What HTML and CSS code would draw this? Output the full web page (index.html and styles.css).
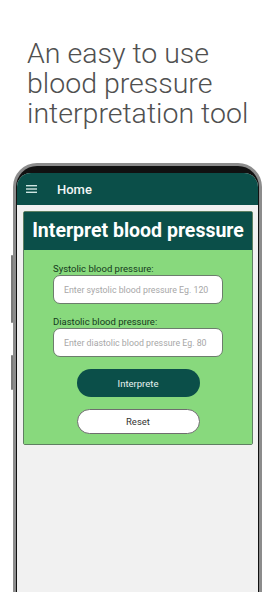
FILE: index.html
```html
<!DOCTYPE html>
<html>
	<head>
		<title>Blood pressure</title>
		<link rel="stylesheet" href="styles.css">
	</head>
	<body>
		<h1 class="headline">An easy to use<br>blood pressure<br>interpretation tool</h1>
		<div class="phone">
			<div class="screen">
				<div class="appbar">
					<svg class="menu" width="11" height="8" viewBox="0 0 11 8">
						<rect x="0" y="0" width="11" height="1.4" fill="#cfe6e2"/>
						<rect x="0" y="3.3" width="11" height="1.4" fill="#cfe6e2"/>
						<rect x="0" y="6.6" width="11" height="1.4" fill="#cfe6e2"/>
					</svg>
					<span class="title">Home</span>
				</div>
				<div class="content">
					<div class="card">
						<div class="card-head">Interpret blood pressure</div>
						<div class="card-body">
							<label class="label">Systolic blood pressure:</label>
							<input class="field" placeholder="Enter systolic blood pressure Eg. 120" />
							<label class="label">Diastolic blood pressure:</label>
							<input class="field" placeholder="Enter diastolic blood pressure Eg. 80" />
							<button class="btn primary">Interprete</button>
							<button class="btn secondary">Reset</button>
						</div>
					</div>
				</div>
			</div>
		</div>
	</body>
</html>
```
FILE: styles.css
```css
body {
	margin: 0;
	background: #fff;
	font-family: Roboto, "Liberation Sans", sans-serif;
	overflow: hidden;
	height: 592px;
}
.headline {
	margin: 0;
	padding: 39px 0 0 27px;
	height: 163px;
	box-sizing: border-box;
	font-family: "Roboto Light", Inter, Roboto, sans-serif;
	font-size: 28.5px;
	font-weight: 200;
	line-height: 30px;
	color: #505050;
}
.phone {
	position: relative;
	margin: 0 11px 0 13px;
	border: 3px solid #8c8c8c;
	border-bottom: none;
	border-radius: 24px 24px 0 0;
	background: #111;
	padding: 7px 1px 0 1px;
	height: 419px;
}
/* side keys */
.phone::before,
.phone::after {
	content: "";
	position: absolute;
	left: -5px;
	width: 2px;
	background: #7a7a7a;
	border-radius: 1px;
}
.phone::before {
	top: 89px;
	height: 68px;
}
.phone::after {
	top: 189px;
	height: 35px;
}
.screen {
	background: #f1f1f1;
	border-radius: 14px 14px 0 0;
	overflow: hidden;
	height: 100%;
}
.appbar {
	height: 32px;
	background: #0b4f49;
	display: flex;
	align-items: center;
	padding-left: 9px;
	gap: 20px;
}
.menu {
	display: block;
}
.title {
	color: #f2f7f6;
	font-size: 13px;
	font-weight: 500;
}
.content {
	padding: 6px 5px 0 6px;
}
.card {
	border: 1px solid #5f7f62;
	border-radius: 2px;
}
.card-head {
	background: #0b4f49;
	color: #fff;
	font-weight: 700;
	font-size: 19.5px;
	text-align: center;
	height: 38px;
	line-height: 38px;
}
.card-body {
	background: #88d97d;
	display: flex;
	flex-direction: column;
	align-items: center;
	padding: 13px 0 10px;
}
.label {
	width: 170px;
	font-size: 9.5px;
	color: #143a1c;
	margin-bottom: 1px;
}
.field {
	width: 170px;
	height: 29px;
	box-sizing: border-box;
	border: 1px solid #6c7d6c;
	border-radius: 7px;
	background: #fff;
	font-family: Roboto, "Liberation Sans", sans-serif;
	font-size: 8.8px;
	padding: 0 8px 0 10px;
	margin-bottom: 12px;
	outline: none;
}
.field::placeholder {
	color: #a7a7a7;
}
.btn {
	width: 123px;
	height: 28px;
	border-radius: 14px;
	font-family: Roboto, "Liberation Sans", sans-serif;
	font-size: 9.5px;
}
.primary {
	background: #0b4f49;
	color: #e8f2f0;
	border: none;
}
.secondary {
	background: #fff;
	color: #333;
	border: 1px solid #6e6e6e;
	margin-top: 12px;
	height: 25px;
}
```
